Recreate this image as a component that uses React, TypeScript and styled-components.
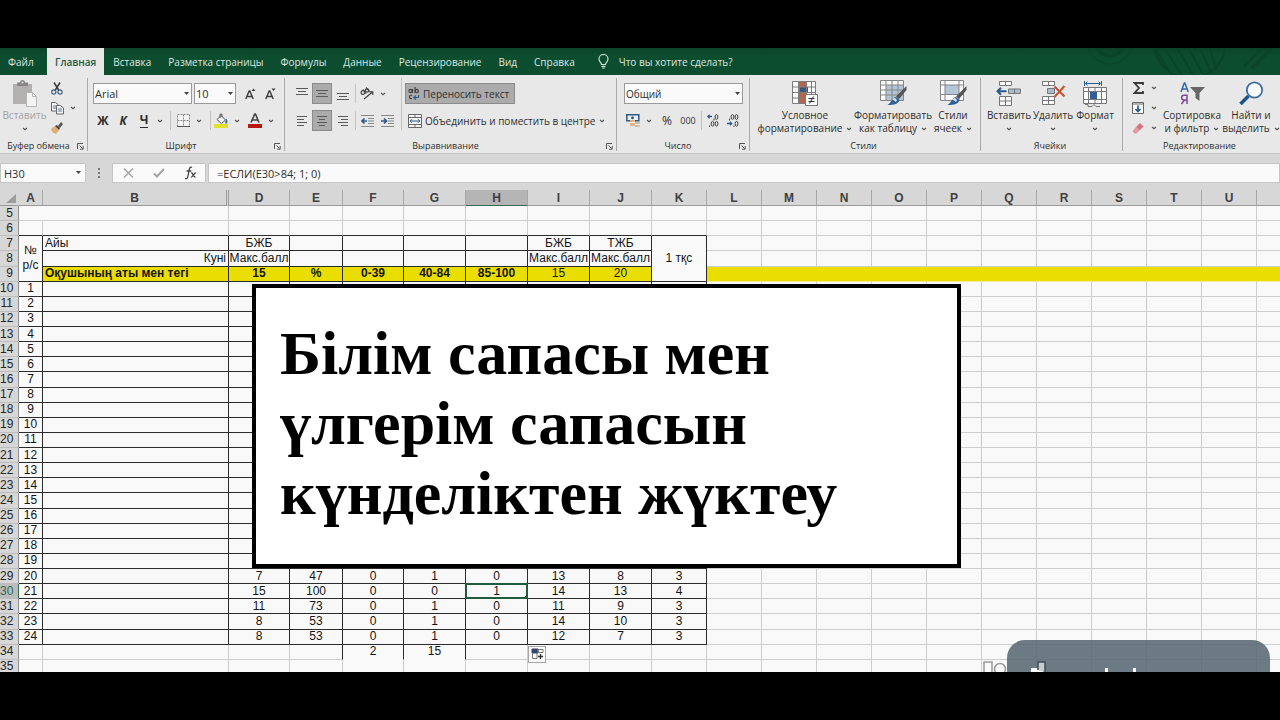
import React from "react";
import styled, { createGlobalStyle, css } from "styled-components";

const ui = `"Open Sans", "Noto Sans", sans-serif`;
const sheetFont = `"Liberation Sans", Arial, sans-serif`;
const ink = "#2e2e2e";
const green = "#0c4d30";
const ribbonBg = "#e8e8e8";
const chrome = "#d7d7d7";

const GlobalStyle = createGlobalStyle`
  * { box-sizing: border-box; }
  body { margin: 0; background: #000; font-family: ${ui}; color: ${ink}; }
  button, select, input { font: inherit; color: inherit; margin: 0; }
  svg { flex-shrink: 0; }
`;

/* ---------- frame ---------- */

const Page = styled.div`
  display: flex;
  flex-direction: column;
  height: 100vh;
  padding: 48px 0;
  background: #000;
`;

const Workbook = styled.main`
  position: relative;
  display: flex;
  flex-direction: column;
  flex: 1;
  min-height: 0;
  overflow: hidden;
  background: #f9f9f9;
`;

/* ---------- tabs ---------- */

const TabBar = styled.nav`
  position: relative;
  display: flex;
  flex: none;
  gap: 1px;
  height: 27px;
  overflow: hidden;
  background: linear-gradient(#0d4228, ${green} 8px);
  color: #dbe8e1;
  font-size: 10px;
`;

const Tab = styled.button<{ $active?: boolean }>`
  flex: none;
  height: 27px;
  padding: 0 8px;
  border: 0;
  background: ${(p) => (p.$active ? ribbonBg : "transparent")};
  color: ${(p) => (p.$active ? "#1f5a3e" : "inherit")};
  font-weight: ${(p) => (p.$active ? 600 : 400)};
  white-space: nowrap;
`;

const FileTab = styled(Tab)`
  width: 46px;
  text-align: left;
`;

const TellMe = styled.button`
  display: flex;
  align-items: center;
  gap: 10px;
  margin-left: 14px;
  padding: 0;
  border: 0;
  background: transparent;
  white-space: nowrap;
`;

const TabDecor = styled.svg`
  position: absolute;
  top: 0;
  right: 0;
`;

/* ---------- ribbon ---------- */

const Ribbon = styled.div`
  display: flex;
  flex: none;
  height: 79px;
  padding: 3px 0 2px;
  border-bottom: 1px solid #c6c6c6;
  background: ${ribbonBg};
  font-size: 10px;
`;

const Group = styled.section<{ $w?: number }>`
  display: flex;
  flex-direction: column;
  justify-content: space-between;
  flex: ${(p) => (p.$w ? `0 0 ${p.$w}px` : "1 0 0")};
  min-width: 0;
  border-right: 1px solid ${(p) => (p.$w ? "#a9a9a9" : "transparent")};
`;

const GroupBody = styled.div<{ $pad?: number }>`
  display: flex;
  padding-left: ${(p) => p.$pad ?? 0}px;
`;

const GroupFoot = styled.footer`
  display: flex;
  align-items: center;
  height: 10px;
  padding-right: 3px;
`;

const GroupTitle = styled.h2`
  flex: 1;
  margin: 0;
  font-size: 9px;
  font-weight: 500;
  line-height: 10px;
  text-align: center;
  white-space: nowrap;
`;

const Stack = styled.div`
  display: flex;
  flex-direction: column;
`;

const ToolRow = styled.div<{ $top?: number }>`
  display: flex;
  align-items: center;
  height: 21px;
  margin-top: ${(p) => p.$top ?? 0}px;
`;

const SmallRow = styled(ToolRow)`
  height: 20px;
`;

const ToolButton = styled.button<{ $w: number; $on?: boolean }>`
  display: flex;
  flex: none;
  align-items: center;
  justify-content: center;
  width: ${(p) => p.$w}px;
  height: 21px;
  padding: 0;
  border: 1px solid ${(p) => (p.$on ? "#8b8b8b" : "transparent")};
  background: ${(p) => (p.$on ? "#ababab" : "transparent")};
`;

const Glyph = styled.span<{ $italic?: boolean; $under?: boolean }>`
  font-size: 12px;
  font-weight: 700;
  line-height: 14px;
  ${(p) => p.$italic && css`font-style: italic;`}
  ${(p) => p.$under && css`border-bottom: 1px solid ${ink};`}
`;

const Percent = styled.span`
  font-size: 12px;
`;

const TextTool = styled.button<{ $on?: boolean; $w: number }>`
  display: flex;
  flex: none;
  align-items: center;
  gap: 3px;
  width: ${(p) => p.$w}px;
  height: 21px;
  padding: 0 2px;
  border: 1px solid ${(p) => (p.$on ? "#8b8b8b" : "transparent")};
  background: ${(p) => (p.$on ? "#ababab" : "transparent")};
  white-space: nowrap;
`;

const Rule = styled.span<{ $w: number; $h?: number }>`
  display: flex;
  flex: none;
  justify-content: center;
  width: ${(p) => p.$w}px;
  height: ${(p) => p.$h ?? 19}px;
  &::before {
    content: "";
    width: 1px;
    background: #c4c4c4;
  }
`;

const Combo = styled.label<{ $w: number }>`
  position: relative;
  display: block;
  flex: none;
  width: ${(p) => p.$w}px;
  height: 21px;
  margin-right: 2px;
  svg {
    position: absolute;
    top: 9px;
    right: 3px;
    pointer-events: none;
  }
`;

const ComboSelect = styled.select<{ $small?: boolean }>`
  width: 100%;
  height: 21px;
  padding: 0 1px;
  border: 1px solid #9a9a9a;
  border-radius: 0;
  background: #fafafa;
  font-size: ${(p) => (p.$small ? 10 : 11)}px;
  appearance: none;
`;

const BigButton = styled.button<{ $w: number; $muted?: boolean }>`
  display: flex;
  flex: none;
  flex-direction: column;
  align-items: center;
  width: ${(p) => p.$w}px;
  padding: 0;
  border: 0;
  background: transparent;
  color: ${(p) => (p.$muted ? "#a2a2a2" : "inherit")};
  line-height: 13px;
  white-space: nowrap;
`;

const BigIcon = styled.span`
  display: flex;
  align-items: center;
  height: 31px;
`;

const Caption = styled.span`
  display: flex;
  align-items: center;
  justify-content: center;
  gap: 4px;
  height: 13px;
`;

/* ---------- formula bar ---------- */

const FormulaBar = styled.div`
  display: flex;
  flex: none;
  height: 36px;
  padding: 9px 0 7px;
  background: ${chrome};
`;

const NameBox = styled.label`
  position: relative;
  flex: none;
  width: 86px;
  svg {
    position: absolute;
    top: 8px;
    right: 5px;
  }
`;

const BarInput = styled.input`
  display: block;
  width: 100%;
  height: 20px;
  padding: 0 3px;
  border: 1px solid #c6c6c6;
  background: #fafafa;
  font-size: 11px;
`;

const FormulaInput = styled(BarInput)`
  flex: 1;
  min-width: 0;
  padding: 0 8px;
`;

const Dots = styled.span`
  display: flex;
  flex: none;
  align-items: center;
  justify-content: center;
  width: 26px;
`;

const FormulaTools = styled.div`
  display: flex;
  flex: none;
  width: 94px;
  margin-right: 2px;
  border: 1px solid #c6c6c6;
  background: #fafafa;
  ${ToolButton} { height: 18px; }
`;

/* ---------- sheet ---------- */

const SheetArea = styled.div`
  flex: 1;
  min-height: 0;
  overflow: hidden;
`;

const Sheet = styled.table`
  width: 1311px;
  height: 485px;
  table-layout: fixed;
  border-collapse: separate;
  border-spacing: 0;
  font-family: ${sheetFont};
  font-size: 12px;
  line-height: 13px;
  color: #141414;
`;

const ColHead = styled.th<{ $sel?: boolean; $double?: boolean }>`
  height: 16px;
  padding: 1px 0 0;
  border-right: ${(p) => (p.$double ? "3px double #9d9d9d" : "1px solid #a8a8a8")};
  border-bottom: 1px solid ${(p) => (p.$sel ? "#2f6b4c" : "#9a9a9a")};
  background: ${(p) => (p.$sel ? "#b5b5b5" : chrome)};
  color: #404040;
  font-weight: 700;
`;

const Corner = styled(ColHead)`
  border-right-color: ${chrome};
  text-align: right;
  svg { display: block; margin-left: 5px; }
`;

const RowHead = styled.th<{ $sel?: boolean }>`
  padding: 0 5px 0 0;
  border-right: 1px solid ${(p) => (p.$sel ? "#2f6b4c" : "#8f8f8f")};
  border-bottom: 1px solid #bdbdbd;
  background: ${(p) => (p.$sel ? "#bcbcbc" : chrome)};
  color: ${(p) => (p.$sel ? "#2f6b4c" : "#262626")};
  font-weight: 400;
  text-align: right;
`;

type CellStyle = {
  $right?: string;
  $bottom?: string;
  $fill?: string;
  $bold?: boolean;
  $align?: string;
};

const Cell = styled.td<CellStyle>`
  position: relative;
  padding: 0 ${(p) => (p.$align === "right" || p.$align === "left" ? 2 : 0)}px;
  border-right: 1px solid ${(p) => p.$right ?? "#cecece"};
  border-bottom: 1px solid ${(p) => p.$bottom ?? "#cecece"};
  background: ${(p) => p.$fill ?? "#f9f9f9"};
  font-weight: ${(p) => (p.$bold ? 700 : 400)};
  text-align: ${(p) => p.$align ?? "center"};
  white-space: nowrap;
`;

const Stacked = styled.span`
  display: block;
  line-height: 15px;
`;

const Selection = styled.span`
  position: absolute;
  inset: -1px -1px -1px -1px;
  border: 2px solid #1f5b3c;
  &::after {
    content: "";
    position: absolute;
    right: -3px;
    bottom: -3px;
    width: 4px;
    height: 4px;
    background: #1f5b3c;
  }
`;

const FillOptions = styled.button`
  position: absolute;
  top: 1px;
  left: 0;
  z-index: 1;
  display: flex;
  align-items: center;
  justify-content: center;
  width: 18px;
  height: 17px;
  padding: 0;
  border: 1px solid #a8a8a8;
  background: #fafafa;
`;

/* ---------- overlays ---------- */

const TitleCard = styled.h1`
  position: absolute;
  top: 236px;
  left: 252px;
  width: 709px;
  height: 284px;
  margin: 0;
  padding: 30px 24px;
  border: 4px solid #000;
  background: #fff;
  color: #000;
  font-family: "Liberation Serif", "Times New Roman", serif;
  font-size: 62px;
  font-weight: 700;
  line-height: 70px;
`;

const Toast = styled.svg`
  position: absolute;
  right: 10px;
  bottom: 0;
`;

/* ---------- icons ---------- */

const Chevron = () => (
  <svg width="6" height="4" viewBox="0 0 6 4" fill="none" stroke="#555" strokeWidth="1.1"><path d="M1 1l2 1.7L5 1" /></svg>
);
const Arrow = () => (
  <svg width="5" height="3" viewBox="0 0 5 3"><path d="M0 0h5L2.5 3z" fill="#444" /></svg>
);
const Launcher = () => (
  <svg width="7" height="7" viewBox="0 0 7 7" fill="none" stroke="#555"><path d="M.5 6V.5H6M2.5 2.5l3 3M6.2 3v3.2H3" /></svg>
);
const PasteIcon = () => (
  <svg width="24" height="27" viewBox="0 0 24 27">
    <path d="M0 4h19v20H0z" fill="#b3b1b0" />
    <path d="M4 2.5h3a2.5 2.5 0 0 1 5 0h3V6H4z" fill="#858585" />
    <circle cx="9.500" cy="2.500" r="1" fill="#e8e8e8" />
    <path d="M13.500 12.500h6l4 4v10h-10z" fill="#f4f4f4" stroke="#b5b5b5" /><path d="M19.500 12.500v4h4" fill="none" stroke="#b5b5b5" />
  </svg>
);
const CutIcon = () => (
  <svg width="12" height="13" viewBox="0 0 12 13" fill="none">
    <path d="M3 .5L8 8.500M9 .5L4 8.500" stroke="#3c3c3c" strokeWidth="1.5" />
    <circle cx="2.800" cy="10" r="2.100" stroke="#3d6288" strokeWidth="1.200" /><circle cx="9" cy="10" r="2.100" stroke="#3d6288" strokeWidth="1.200" />
  </svg>
);
const CopyIcon = () => (
  <svg width="13" height="14" viewBox="0 0 13 14" fill="#f4f4f4" stroke="#666">
    <path d="M.5 1.500h4l2.500 2v6.500H.5z" /><path d="M2 5h3M2 7h3" stroke="#5b7896" />
    <path d="M5.500 4.500h4l3 2.500v6h-7z" /><path d="M7 8h4M7 10h4" stroke="#5b7896" />
  </svg>
);
const BrushIcon = () => (
  <svg width="12" height="12" viewBox="0 0 12 12">
    <path d="M1 6l3-2 4 4-3 4C3 11 1 10 0 8z" fill="#dcae70" /><path d="M4 4l2-1 3 3-1 2z" fill="#444" /><path d="M7 4l3-4 2 2-3 4z" fill="#555" />
  </svg>
);
const GrowFont = ({ down }: { down?: boolean }) => (
  <svg width="11" height="12" viewBox="0 0 11 12" fill="none" stroke="#3c3c3c">
    <path d="M.8 11L4.200 3h.6l3.400 8M2 8.500h5" strokeWidth="1.400" />
    <path d={down ? "M6.500.5h4L8.500 3z" : "M6.500 3h4L8.500.5z"} fill="#3c3c3c" stroke="none" />
  </svg>
);
const BordersIcon = () => (
  <svg width="13" height="13" viewBox="0 0 13 13" fill="#f4f4f4" stroke="#8a8a8a">
    <path d="M.5.5h12v12H.5zM6.500.5v12M.5 6.500h12" strokeDasharray="2 1" /><path d="M0 12.500h13" stroke="#555" />
  </svg>
);
const FillIcon = () => (
  <svg width="15" height="15" viewBox="0 0 15 15">
    <path d="M3 6.500L7 2.500l4.500 4.500L7.500 10.500z" fill="#f7f7f7" stroke="#555" /><path d="M6 5V1.200h2V4" fill="none" stroke="#555" />
    <path d="M12 5.500c2 2 2 4 .5 5s-1.500-2-.5-5z" fill="#3d6f8f" /><path d="M0 11h14v4H0z" fill="#e2e02c" />
  </svg>
);
const FontColorIcon = () => (
  <svg width="14" height="15" viewBox="0 0 14 15">
    <path d="M3 9.500L6.700 1h.7L11 9.500M4.200 7h5.600" fill="none" stroke="#444" strokeWidth="1.600" /><path d="M0 11h14v4H0z" fill="#b8170f" />
  </svg>
);
const Lines = ({ rows }: { rows: [number, number][] }) => (
  <svg width="10" height="12" viewBox="0 0 10 12" stroke="#5a5a5a">
    {rows.map(([a, b], i) => <path key={i} d={`M${a} ${i * 3 + 1.5}h${b}`} />)}
  </svg>
);
const VAlign = ({ at }: { at: number }) => (
  <svg width="12" height="20" viewBox="0 0 12 20" stroke="#5a5a5a">
    <path d={`M0 ${at + 0.5}h12M2 ${at + 3.5}h8M0 ${at + 6.5}h12`} />
  </svg>
);
const OrientIcon = () => (
  <svg width="14" height="13" viewBox="0 0 14 13" fill="none" stroke="#444" strokeWidth="1.200">
    <circle cx="3" cy="5.500" r="1.900" /><path d="M3 2.500l3 4" /><circle cx="7" cy="3.500" r="1.700" /><path d="M6 .5l3.500 4" /><path d="M4 12l8.500-7M12.800 8V4.800H9.500" />
  </svg>
);
const IndentIcon = ({ out }: { out?: boolean }) => (
  <svg width="13" height="12" viewBox="0 0 13 12" fill="none">
    <path d="M0 .5h13M7 3.500h6M7 6h6M7 8.500h6M0 11.500h13" stroke="#888" />
    <path d={out ? "M6 6H1.500M3.500 3.500L1 6l2.500 2.500" : "M0 6h4.500M3 3.500L5.500 6 3 8.500"} stroke="#2b5b8a" strokeWidth="1.700" />
  </svg>
);
const WrapIcon = () => (
  <svg width="12" height="13" viewBox="0 0 12 13" fill="none" stroke="#444" strokeWidth="1.200">
    <circle cx="2.500" cy="4" r="1.600" /><path d="M4.500 2v4M7 0v6" /><circle cx="8.800" cy="4" r="1.600" />
    <path d="M4 8.500a1.700 1.700 0 1 0 0 3" /><path d="M6 10.500h4.500V8M7.800 8.500l-2 2 2 2" stroke="#335f8e" />
  </svg>
);
const MergeIcon = () => (
  <svg width="14" height="14" viewBox="0 0 14 14" fill="#f4f4f4" stroke="#666">
    <path d="M.5.5h13v13H.5z" /><path d="M.5 3.500h13M.5 10.500h13M7 .5v3M7 10.500v3" />
    <path d="M2 7h10M4 5.200L2.200 7 4 8.800M10 5.200L11.800 7 10 8.800" fill="none" stroke="#2b5b8a" />
  </svg>
);
const MoneyIcon = () => (
  <svg width="14" height="13" viewBox="0 0 14 13">
    <path d="M.8.8h12v6H.8z" fill="#e9eff5" stroke="#2f5b88" strokeWidth="1.500" /><circle cx="6.500" cy="3.800" r="1.500" fill="#2f5b88" />
    <path d="M4 6h5v6H4z" fill="#e3b68a" /><path d="M9 8h5v5H9z" fill="#c9bcb0" /><path d="M4 8.500h5M9 10.500h5" stroke="#f4f4f4" />
  </svg>
);
const DecimalIcon = ({ less }: { less?: boolean }) => (
  <svg width="12" height="13" viewBox="0 0 12 13" fill="none" stroke="#3c3c3c">
    <ellipse cx="9.500" cy="3" rx="1.400" ry="2.400" />
    {less ? <ellipse cx="5.500" cy="3" rx="1.400" ry="2.400" /> : <ellipse cx="5.500" cy="9.800" rx="1.400" ry="2.400" />}
    <ellipse cx="9.500" cy="9.800" rx="1.400" ry="2.400" />
    <path d={less ? "M2.500 4.500v2M7 11.500v1.500" : "M7 4.500v2M2.500 11.500v1.500"} />
    <path d={less ? "M0 9.500h4.500M3 7.800l1.700 1.700L3 11.200" : "M5 2.500H.8M2.500.8L.8 2.500l1.700 1.700"} stroke="#2b5b8a" strokeWidth="1.300" />
  </svg>
);
const CondIcon = () => (
  <svg width="26" height="25" viewBox="0 0 26 25">
    <path d="M.5.500h23v22H.5z" fill="#fafafa" /><path d="M7 1h7v21H7z" fill="#b5654a" /><path d="M8 6h8v5H8z" fill="#3b577c" />
    <path d="M.5.500h23v22H.5zM6.500.5v22M14.500.5v22M19.500.5v22M.5 6h23M.5 11.500h23M.5 17h23" fill="none" stroke="#7d7d7d" />
    <path d="M13.500 13.500h12v11h-12z" fill="#fafafa" stroke="#777" /><path d="M16.500 17.500h6M16.500 20.500h6M21.500 15.500l-4 7" stroke="#333" />
  </svg>
);
const TableIcon = ({ cells }: { cells?: boolean }) => (
  <svg width="27" height="27" viewBox="0 0 27 27">
    <path d="M.5.500h23v20H.5z" fill="#fafafa" />
    <path d={cells ? "M5 5h14v9H5z" : "M6 5h17v15H6z"} fill="#b3c5d6" />
    <path d={cells ? "M.5.500h23v20H.5zM5 .5v20M19 .5v20M.5 5h23M.5 14.500h23" : "M.5.500h23v20H.5zM6 .5v20M12 .5v20M18 .5v20M.5 5h23M.5 10h23M.5 15h23"} fill="none" stroke="#858585" />
    <path d="M26.500 6v4L19 19l-3-2.500z" fill="#555" /><path d="M16 17l3.500 3c-1 4-5 5-12 5 4-2 4-7 8.500-8z" fill="#2f5f93" />
    <path d="M12 19l3-1 2 2-1 2z" fill="#d9e4ee" />
  </svg>
);
const InsertIcon = () => (
  <svg width="26" height="25" viewBox="0 0 26 25" fill="#fafafa" stroke="#777">
    <path d="M3.500.5h12v4h-12zM9.500.5v4M3.500 15.500h12v9h-12zM9.500 15.500v9M3.500 20h12" /><path d="M12.500 8h12v4.500h-12zM18.500 8v4.500" fill="#a9bccb" />
    <path d="M1.500 10.300h9M5 6.800l-3.500 3.500L5 13.800" fill="none" stroke="#2b5b8a" strokeWidth="2" />
  </svg>
);
const DeleteIcon = () => (
  <svg width="26" height="25" viewBox="0 0 26 25" fill="#fafafa" stroke="#777">
    <path d="M2.500.5h12v4h-12zM8.500.5v4M2.500 15.500h12v8h-12zM8.500 15.500v8M2.500 19.500h12" /><path d="M7.500 7.500h7v5h-7z" fill="#a9bccb" />
    <path d="M14.500 5.500l10 10M24.500 5l-10 11" fill="none" stroke="#c4542f" strokeWidth="2" />
  </svg>
);
const FormatIcon = () => (
  <svg width="25" height="26" viewBox="0 0 25 26" fill="#fafafa" stroke="#777">
    <path d="M2.500 2.500h15M4.500.5l-2 2 2 2M15.500.5l2 2-2 2M1.500 0v5M18.500 0v5" fill="none" stroke="#2b5b8a" />
    <path d="M.5 6.500h23v16H.5zM5.500 6.500v16M18.500 6.500v16M.5 10.500h23M.5 18.500h23M12 6.500v4M12 18.500v4" /><path d="M7 11h7v7H7z" fill="#2f5f93" stroke="none" />
    <path d="M2 23.500h3v2h4l2-2 2 2h4" fill="none" />
  </svg>
);
const SigmaIcon = () => (
  <svg width="11" height="12" viewBox="0 0 11 12" fill="none" stroke="#3a3a3a" strokeWidth="1.800"><path d="M10 3V1H1.500l4.500 5-4.500 5H10V9" /></svg>
);
const FillDownIcon = () => (
  <svg width="12" height="12" viewBox="0 0 12 12"><path d="M.5.5h11v11H.5z" fill="#fafafa" stroke="#666" /><path d="M.5 2h11" stroke="#666" /><path d="M6 3.500v6M3.500 7L6 9.500 8.500 7" fill="none" stroke="#2b5b8a" strokeWidth="1.700" /></svg>
);
const EraserIcon = () => (
  <svg width="12" height="11" viewBox="0 0 12 11"><path d="M4 4l4-4 3.500 3.500-4 4z" fill="#d4747c" /><path d="M4 4l3.500 3.500-3 3H2.500L.5 8z" fill="#e09a9f" /></svg>
);
const SortIcon = () => (
  <svg width="25" height="24" viewBox="0 0 25 24" fill="none">
    <path d="M1 10L4.300 1h.6L8.200 10M2.200 7h4.800" stroke="#2f6aa0" strokeWidth="1.500" />
    <path d="M7 22v-8.800H4a2.300 2.300 0 0 0 0 4.800h3M4.500 18L1.500 22" stroke="#7c4596" strokeWidth="1.500" />
    <path d="M10 5h15l-5.500 6v8l-4-3v-5z" fill="#666" />
  </svg>
);
const FindIcon = () => (
  <svg width="25" height="25" viewBox="0 0 25 25" fill="none"><path d="M9.500 15L1.500 23" stroke="#1f5488" strokeWidth="3.500" /><circle cx="15.500" cy="9" r="7.700" fill="#fafafa" stroke="#3b6f9f" strokeWidth="1.800" /></svg>
);
const BulbIcon = () => (
  <svg width="11" height="15" viewBox="0 0 11 15" fill="none" stroke="#cfe0d6" strokeWidth="1.200"><path d="M3.500 10.500C3.500 8.500 1 8 1 5a4.500 4.500 0 0 1 9 0c0 3-2.500 3.500-2.500 5.500zM3.500 12.300h4M4.200 14h2.600" /></svg>
);

/* ---------- data ---------- */

const tabs = ["Вставка", "Разметка страницы", "Формулы", "Данные", "Рецензирование", "Вид", "Справка"];
const cols: [string, number][] = [
  ["A", 24], ["B", 186], ["D", 61], ["E", 53], ["F", 61], ["G", 62], ["H", 62], ["I", 62], ["J", 62], ["K", 55],
  ...["L", "M", "N", "O", "P", "Q", "R", "S", "T", "U", "V"].map((c) => [c, 55] as [string, number]),
];
const marks: Record<string, string[]> = {
  29: ["7", "47", "0", "1", "0", "13", "8", "3"],
  30: ["15", "100", "0", "0", "1", "14", "13", "4"],
  31: ["11", "73", "0", "1", "0", "11", "9", "3"],
  32: ["8", "53", "0", "1", "0", "14", "10", "3"],
  33: ["8", "53", "0", "1", "0", "12", "7", "3"],
};
const headers: Record<string, string[]> = {
  7: ["Айы", "БЖБ", "", "", "", "", "БЖБ", "ТЖБ"],
  8: ["Куні", "Макс.балл", "", "", "", "", "Макс.балл", "Макс.балл"],
  9: ["Оқушының аты мен тегі", "15", "%", "0-39", "40-84", "85-100", "15", "20"],
};
const BLACK = "#2b2b2b";
const YELLOW = "#eadd00";
const rowNumbers = Array.from({ length: 31 }, (_, i) => i + 5);

const rowCells = (row: number) =>
  cols.map(([col], i) => {
    const inTable = i < 10;
    const key = col + row;
    if (row === 5 && col === "A") return <Cell key={key} colSpan={2} />;
    if (row === 5 && col === "B") return null;
    if (row <= 6) return <Cell key={key} $bottom={row === 6 && inTable ? BLACK : undefined} />;
    if (row <= 9) {
      if (col === "A" || col === "K") {
        if (row > 7) return null;
        return (
          <Cell key={key} rowSpan={3} $right={BLACK} $bottom={BLACK}>
            {col === "A" ? <><Stacked>№</Stacked><Stacked>р/с</Stacked></> : "1 тқс"}
          </Cell>
        );
      }
      const fill = row === 9 ? YELLOW : undefined;
      if (!inTable) return <Cell key={key} $fill={fill} $right={fill} $bottom={row === 9 ? "#f3ec90" : undefined} />;
      return (
        <Cell key={key} $fill={fill} $right={BLACK} $bottom={BLACK} $bold={row === 9 && i < 7}
          $align={col === "B" ? (row === 8 ? "right" : "left") : "center"}>
          {headers[row][i - 1]}
        </Cell>
      );
    }
    if (row <= 33 && inTable) {
      const text = i === 0 ? String(row - 9) : i === 1 ? "" : marks[row]?.[i - 2];
      return (
        <Cell key={key} $right={BLACK} $bottom={BLACK}>
          {text}
          {key === "H30" && <Selection />}
        </Cell>
      );
    }
    if (row === 34) {
      const dark = ["E", "F", "G"].includes(col);
      return (
        <Cell key={key} $right={dark ? BLACK : undefined} $bottom={col === "F" || col === "G" ? "#f9f9f9" : undefined}>
          {col === "F" ? "2" : col === "G" ? "15" : ""}
          {col === "I" && (
            <FillOptions aria-label="Параметры автозаполнения">
              <svg width="13" height="12" viewBox="0 0 13 12" fill="none" stroke="#777">
                <path d="M1 1h6v4H1z" fill="#34466e" stroke="#34466e" /><path d="M7 1.500h5v3H7zM1.500 5v5.500H6V5" /><path d="M9.500 6v5M7 8.500h5" stroke="#333" strokeWidth="1.300" />
              </svg>
            </FillOptions>
          )}
        </Cell>
      );
    }
    return <Cell key={key} />;
  });

const Foot = ({ title, launch = true }: { title: string; launch?: boolean }) => (
  <GroupFoot><GroupTitle>{title}</GroupTitle>{launch && <Launcher />}</GroupFoot>
);

const Drop = ({ w }: { w: number }) => <ToolButton $w={w} aria-label="Ещё"><Chevron /></ToolButton>;

const Big = ({ w, icon, lines, chevron = "inline", muted }: {
  w: number; icon: React.ReactNode; lines: string[]; chevron?: "inline" | "below"; muted?: boolean;
}) => (
  <BigButton $w={w} $muted={muted}>
    <BigIcon>{icon}</BigIcon>
    <Caption>{lines[0]}</Caption>
    <Caption>{chevron === "inline" && lines[1]}<Chevron /></Caption>
  </BigButton>
);

export default function App() {
  return (
    <Page>
      <GlobalStyle />
      <Workbook>
        <TabBar>
          <TabDecor width="420" height="27" viewBox="0 0 420 27" fill="none" stroke="#0a432a" strokeWidth="3">
            <circle cx="250" cy="-6" r="14" /><circle cx="250" cy="-6" r="22" strokeWidth="1" />
            <path d="M290 -8l22 36M300 -8l22 36M312 -8l22 36M324 -8l20 36M336 -8l16 34M348 -8l8 30" strokeWidth="2" />
            <circle cx="330" cy="-6" r="36" strokeWidth="2" /><path d="M392 20l22-22M384 18l18-18" />
          </TabDecor>
          <FileTab>Файл</FileTab>
          <Tab $active>Главная</Tab>
          {tabs.map((t) => <Tab key={t}>{t}</Tab>)}
          <TellMe><BulbIcon />Что вы хотите сделать?</TellMe>
        </TabBar>

        <Ribbon>
          <Group $w={88}>
            <GroupBody>
              <Big w={49} muted chevron="below" icon={<PasteIcon />} lines={["Вставить"]} />
              <Stack>
                <SmallRow><ToolButton $w={16} aria-label="Вырезать"><CutIcon /></ToolButton></SmallRow>
                <SmallRow><ToolButton $w={16} aria-label="Копировать"><CopyIcon /></ToolButton><Drop w={16} /></SmallRow>
                <SmallRow><ToolButton $w={16} aria-label="Формат по образцу"><BrushIcon /></ToolButton></SmallRow>
              </Stack>
            </GroupBody>
            <Foot title="Буфер обмена" />
          </Group>

          <Group $w={197}>
            <GroupBody $pad={5}>
              <Stack>
                <ToolRow $top={5}>
                  <Combo $w={99}><ComboSelect aria-label="Шрифт"><option>Arial</option></ComboSelect><Arrow /></Combo>
                  <Combo $w={42}><ComboSelect aria-label="Размер"><option>10</option></ComboSelect><Arrow /></Combo>
                  <ToolButton $w={24} aria-label="Увеличить шрифт"><GrowFont /></ToolButton>
                  <ToolButton $w={16} aria-label="Уменьшить шрифт"><GrowFont down /></ToolButton>
                </ToolRow>
                <ToolRow $top={6}>
                  <ToolButton $w={20}><Glyph>Ж</Glyph></ToolButton>
                  <ToolButton $w={20}><Glyph $italic>К</Glyph></ToolButton>
                  <ToolButton $w={22}><Glyph $under>Ч</Glyph></ToolButton>
                  <Drop w={10} /><Rule $w={10} />
                  <ToolButton $w={16} aria-label="Границы"><BordersIcon /></ToolButton><Drop w={16} /><Rule $w={6} />
                  <ToolButton $w={16} aria-label="Цвет заливки"><FillIcon /></ToolButton><Drop w={16} />
                  <ToolButton $w={20} aria-label="Цвет шрифта"><FontColorIcon /></ToolButton><Drop w={12} />
                </ToolRow>
              </Stack>
            </GroupBody>
            <Foot title="Шрифт" />
          </Group>

          <Group $w={332}>
            <GroupBody $pad={6}>
              <Stack>
                <ToolRow $top={5}>
                  <ToolButton $w={21} aria-label="По верхнему краю"><VAlign at={4} /></ToolButton>
                  <ToolButton $w={20} $on aria-label="По середине"><VAlign at={6} /></ToolButton>
                  <ToolButton $w={21} aria-label="По нижнему краю"><VAlign at={9} /></ToolButton>
                  <Rule $w={4} />
                  <ToolButton $w={20} aria-label="Ориентация"><OrientIcon /></ToolButton><Drop w={12} />
                </ToolRow>
                <ToolRow $top={6}>
                  <ToolButton $w={21} aria-label="По левому краю"><Lines rows={[[0, 10], [0, 7], [0, 10], [0, 7]]} /></ToolButton>
                  <ToolButton $w={20} $on aria-label="По центру"><Lines rows={[[0, 10], [2, 6], [0, 10], [2, 6]]} /></ToolButton>
                  <ToolButton $w={21} aria-label="По правому краю"><Lines rows={[[0, 10], [3, 7], [0, 10], [3, 7]]} /></ToolButton>
                  <Rule $w={4} />
                  <ToolButton $w={20} aria-label="Уменьшить отступ"><IndentIcon out /></ToolButton>
                  <ToolButton $w={20} aria-label="Увеличить отступ"><IndentIcon /></ToolButton>
                </ToolRow>
              </Stack>
              <Rule $w={8} $h={52} />
              <Stack>
                <ToolRow $top={5}><TextTool $on $w={110}><WrapIcon />Переносить текст</TextTool></ToolRow>
                <ToolRow $top={6}><TextTool $w={190}><MergeIcon />Объединить и поместить в центре</TextTool><Drop w={14} /></ToolRow>
              </Stack>
            </GroupBody>
            <Foot title="Выравнивание" />
          </Group>

          <Group $w={133}>
            <GroupBody $pad={7}>
              <Stack>
                <ToolRow $top={5}>
                  <Combo $w={119}><ComboSelect $small aria-label="Числовой формат"><option>Общий</option></ComboSelect><Arrow /></Combo>
                </ToolRow>
                <ToolRow $top={6}>
                  <ToolButton $w={18} aria-label="Финансовый формат"><MoneyIcon /></ToolButton><Drop w={14} />
                  <ToolButton $w={22}><Percent>%</Percent></ToolButton>
                  <ToolButton $w={20}><GroupTitle as="span">000</GroupTitle></ToolButton>
                  <Rule $w={6} />
                  <ToolButton $w={18} aria-label="Увеличить разрядность"><DecimalIcon /></ToolButton>
                  <ToolButton $w={22} aria-label="Уменьшить разрядность"><DecimalIcon less /></ToolButton>
                </ToolRow>
              </Stack>
            </GroupBody>
            <Foot title="Число" />
          </Group>

          <Group $w={231}>
            <GroupBody $pad={7}>
              <Big w={96} icon={<CondIcon />} lines={["Условное", "форматирование"]} />
              <Big w={80} icon={<TableIcon />} lines={["Форматировать", "как таблицу"]} />
              <Big w={40} icon={<TableIcon cells />} lines={["Стили", "ячеек"]} />
            </GroupBody>
            <Foot title="Стили" launch={false} />
          </Group>

          <Group $w={142}>
            <GroupBody $pad={6}>
              <Big w={44} chevron="below" icon={<InsertIcon />} lines={["Вставить"]} />
              <Big w={44} chevron="below" icon={<DeleteIcon />} lines={["Удалить"]} />
              <Big w={40} chevron="below" icon={<FormatIcon />} lines={["Формат"]} />
            </GroupBody>
            <Foot title="Ячейки" launch={false} />
          </Group>

          <Group>
            <GroupBody $pad={6}>
              <Stack>
                <SmallRow><ToolButton $w={18} aria-label="Автосумма"><SigmaIcon /></ToolButton><Drop w={14} /></SmallRow>
                <SmallRow><ToolButton $w={18} aria-label="Заполнить"><FillDownIcon /></ToolButton><Drop w={14} /></SmallRow>
                <SmallRow><ToolButton $w={18} aria-label="Очистить"><EraserIcon /></ToolButton><Drop w={14} /></SmallRow>
              </Stack>
              <Big w={62} icon={<SortIcon />} lines={["Сортировка", "и фильтр"]} />
              <Big w={56} icon={<FindIcon />} lines={["Найти и", "выделить"]} />
            </GroupBody>
            <Foot title="Редактирование" launch={false} />
          </Group>
        </Ribbon>

        <FormulaBar>
          <NameBox><BarInput aria-label="Имя" defaultValue="H30" /><Arrow /></NameBox>
          <Dots><svg width="2" height="11" viewBox="0 0 2 11" fill="#777"><path d="M0 0h2v2H0zM0 4h2v2H0zM0 8h2v2H0z" /></svg></Dots>
          <FormulaTools>
            <ToolButton $w={30} aria-label="Отмена"><svg width="11" height="10" viewBox="0 0 11 10" stroke="#a5a5a5" strokeWidth="1.500"><path d="M1 .5l9 9M10 .5l-9 9" /></svg></ToolButton>
            <ToolButton $w={32} aria-label="Ввод"><svg width="12" height="10" viewBox="0 0 12 10" fill="none" stroke="#a5a5a5" strokeWidth="2"><path d="M1 5.500l3 3L11 1" /></svg></ToolButton>
            <ToolButton $w={30} aria-label="Вставить функцию">
              <svg width="13" height="14" viewBox="0 0 13 14" fill="none" stroke="#444" strokeWidth="1.300"><path d="M8 1.500C6 .5 5.500 2 5 4.500L4 10c-.4 2.500-1.500 3-3 2.300M2.500 5h4.800M7 7c2-1 2 4.500 4.500 4M12 7c-2-.5-3 4.500-5 4" /></svg>
            </ToolButton>
          </FormulaTools>
          <FormulaInput aria-label="Строка формул" defaultValue="=ЕСЛИ(E30>84; 1; 0)" />
        </FormulaBar>

        <SheetArea>
          <Sheet>
            <colgroup>
              <col style={{ width: 19 }} />
              {cols.map(([c, w]) => <col key={c} style={{ width: w }} />)}
            </colgroup>
            <thead>
              <tr>
                <Corner><svg width="11" height="9" viewBox="0 0 11 9"><path d="M11 0v9H1z" fill="#9c9c9c" /></svg></Corner>
                {cols.map(([c]) => <ColHead key={c} scope="col" $sel={c === "H"} $double={c === "B"}>{c}</ColHead>)}
              </tr>
            </thead>
            <tbody>
              {rowNumbers.map((r) => (
                <tr key={r}>
                  <RowHead scope="row" $sel={r === 30}>{r}</RowHead>
                  {rowCells(r)}
                </tr>
              ))}
            </tbody>
          </Sheet>
        </SheetArea>

        <Toast width="288" height="32" viewBox="0 0 288 32">
          <path d="M25 32V18A18 18 0 0 1 43 0H270A18 18 0 0 1 288 18V32z" fill="#5c6c75" fillOpacity=".9" />
          <path d="M2 32V22h8v10" fill="#fafafa" stroke="#9a9a9a" strokeWidth="1.500" />
          <circle cx="18" cy="29" r="5.500" fill="#fafafa" stroke="#9a9a9a" strokeWidth="1.500" />
          <path d="M49 28h12v4H49z" fill="#fafafa" /><path d="M56 30v-8h7v10" fill="#c5ccd0" stroke="#3f4d56" strokeWidth="1.500" />
          <path d="M123 28h3v4h-3zM151 28h3v4h-3z" fill="#fafafa" />
        </Toast>

        <TitleCard>Білім сапасы мен үлгерім сапасын күнделіктен жүктеу</TitleCard>
      </Workbook>
    </Page>
  );
}
